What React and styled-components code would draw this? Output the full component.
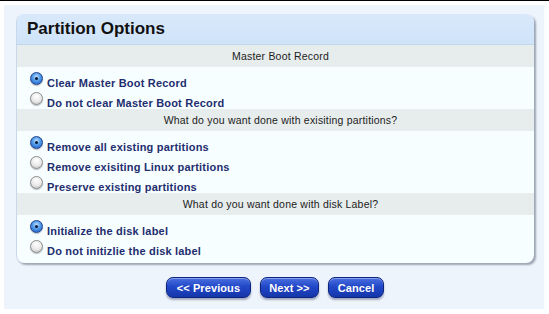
import React from 'react';
import styled, { createGlobalStyle } from 'styled-components';

const GlobalStyle = createGlobalStyle`
  body {
    margin: 0;
    background: #ffffff;
    font-family: "Liberation Sans", Arial, sans-serif;
  }
`;

const Frame = styled.div`
  width: 549px;
  height: 314px;
  box-sizing: border-box;
  border-top: 1px solid #000;
  padding: 4px 5px 6px 4px;
`;

const Panel = styled.div`
  background: #eef4fb;
  padding: 9px 10px 11px 12px;
  display: flex;
  flex-direction: column;
`;

const Card = styled.div`
  background: #f7feff;
  border-radius: 8px;
  border-left: 1px solid #c9d7ea;
  box-shadow: 2px 2px 2px rgba(90, 100, 120, 0.55);
  overflow: hidden;
  padding-bottom: 6px;
`;

const Header = styled.div`
  height: 31px;
  display: flex;
  align-items: center;
  padding-left: 10px;
  background: linear-gradient(to bottom, #d9e9fb, #cfe3f9);
  border-bottom: 1px solid #c4d6ec;
  box-sizing: border-box;
`;

const Title = styled.h1`
  margin: 0;
  font-size: 17px;
  font-weight: 700;
  color: #111;
`;

const SectionHead = styled.div`
  height: 22px;
  line-height: 22px;
  background: #e7ecec;
  text-align: center;
  padding-left: 10px;
  font-size: 10.5px;
  letter-spacing: 0.2px;
  color: #1c1c1c;
`;

const Group = styled.div`
  padding-top: 2px;
`;

const Row = styled.label`
  height: 20px;
  display: flex;
  align-items: flex-start;
  padding-left: 13px;
  gap: 4px;
`;

const Radio = styled.span`
  width: 13px;
  height: 13px;
  margin-top: 3px;
  border-radius: 50%;
  box-sizing: border-box;
  position: relative;
  border: 1px solid ${p => (p.checked ? '#1f3f8c' : '#8a8a8a')};
  background: ${p =>
    p.checked
      ? 'radial-gradient(circle at 50% 35%, #bfe0ff 0%, #4f9ae8 45%, #1d58c0 100%)'
      : 'radial-gradient(circle at 50% 30%, #ffffff 0%, #ececec 50%, #bdbdbd 100%)'};
  box-shadow: 0 1px 1px rgba(0, 0, 0, 0.25);

  &::after {
    content: '';
    display: ${p => (p.checked ? 'block' : 'none')};
    position: absolute;
    left: 4px;
    top: 4px;
    width: 3px;
    height: 3px;
    border-radius: 50%;
    background: #0b1a3a;
  }
`;

const Label = styled.span`
  margin-top: 4px;
  line-height: 20px;
  font-size: 11px;
  font-weight: 700;
  letter-spacing: 0.2px;
  color: #1e2e6e;
`;

const Actions = styled.div`
  display: flex;
  justify-content: center;
  gap: 9px;
  margin-top: 14px;
`;

const Button = styled.button`
  height: 21px;
  padding: 0 ${p => p.pad || 10}px;
  border: 1px solid #0d257f;
  border-radius: 7px;
  background: linear-gradient(to bottom, #4a6fe0 0%, #2248c8 45%, #1536aa 100%);
  box-shadow: 0 2px 2px rgba(20, 30, 80, 0.35), inset 0 1px 0 rgba(255, 255, 255, 0.35);
  color: #fff;
  font-family: "Liberation Sans", Arial, sans-serif;
  font-size: 11px;
  font-weight: 700;
  letter-spacing: 0.1px;
  cursor: pointer;
`;

const sections = [
  {
    title: 'Master Boot Record',
    options: ['Clear Master Boot Record', 'Do not clear Master Boot Record'],
  },
  {
    title: 'What do you want done with exisiting partitions?',
    options: [
      'Remove all existing partitions',
      'Remove exisiting Linux partitions',
      'Preserve existing partitions',
    ],
  },
  {
    title: 'What do you want done with disk Label?',
    options: ['Initialize the disk label', 'Do not initizlie the disk label'],
  },
];

const App = () => {
  return (
    <Frame>
      <GlobalStyle />
      <Panel>
        <Card>
          <Header>
            <Title>Partition Options</Title>
          </Header>
          {sections.map((section, i) => (
            <React.Fragment key={i}>
              <SectionHead>{section.title}</SectionHead>
              <Group>
                {section.options.map((opt, j) => (
                  <Row key={j}>
                    <Radio checked={j === 0} />
                    <Label>{opt}</Label>
                  </Row>
                ))}
              </Group>
            </React.Fragment>
          ))}
        </Card>
        <Actions>
          <Button pad={10}>&lt;&lt; Previous</Button>
          <Button pad={8}>Next &gt;&gt;</Button>
          <Button pad={9}>Cancel</Button>
        </Actions>
      </Panel>
    </Frame>
  );
};

export default App;
